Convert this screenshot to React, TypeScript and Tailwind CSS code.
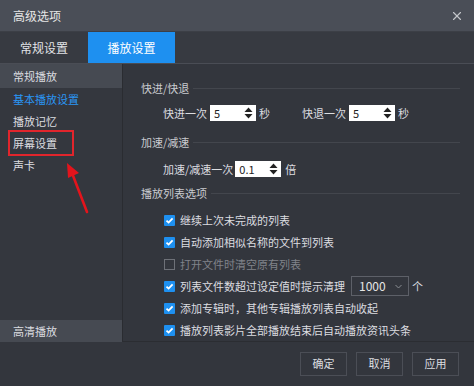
import { X } from 'lucide-react';

const font = { fontFamily: '"Noto Sans CJK SC", "Microsoft YaHei", sans-serif' };

const SectionTitle = ({ title }: { title: string }) => (
  <div className="flex items-center h-[16px] gap-[4px] text-[#c9cbcf]">
    <span className="whitespace-nowrap">{title}</span>
    <div className="flex-1 h-px bg-[#43464d]" />
  </div>
);

const Spin = ({ value, width }: { value: string; width: string }) => (
  <div className={`${width} h-[16px] bg-white flex items-center justify-between pl-[4px] pr-[3px] text-[#222]`}>
    <span className="leading-none">{value}</span>
    <svg width="9" height="12" viewBox="0 0 9 12">
      <path d="M4.5 0.5 L8.5 5 L0.5 5 Z" fill="#222" />
      <path d="M0.5 7 L8.5 7 L4.5 11.5 Z" fill="#222" />
    </svg>
  </div>
);

const Check = ({ label, checked = true, disabled = false, children }: { label: string; checked?: boolean; disabled?: boolean; children?: React.ReactNode }) => (
  <div className="flex items-center h-[22px] pl-[41px]">
    {checked ? (
      <div className="w-[11px] h-[11px] bg-[#1e90f0] flex items-center justify-center rounded-[1px]">
        <svg width="9" height="9" viewBox="0 0 9 9">
          <path d="M1.5 4.6 L3.6 6.6 L7.6 2.4" stroke="white" strokeWidth="1.8" fill="none" />
        </svg>
      </div>
    ) : (
      <div className="w-[11px] h-[11px] border border-[#6e7178]" />
    )}
    <span className={`ml-[5px] whitespace-nowrap ${disabled ? 'text-[#80838a]' : 'text-[#dcdde0]'}`}>{label}</span>
    {children}
  </div>
);

const App = () => {
  return (
    <div className="w-[474px] h-[386px] bg-[#33363d] flex flex-col text-[11px] overflow-hidden" style={font}>
      {/* Title bar */}
      <div className="h-[32px] bg-[#4a4e57] flex items-center justify-between pl-[13px] pr-[10px] border-b border-[#3c3f46]">
        <span className="text-[12px] text-[#e6e6e6]">高级选项</span>
        <X className="w-[14px] h-[14px] text-[#c3c5c9]" strokeWidth={2} />
      </div>

      {/* Tabs */}
      <div className="h-[32px] bg-[#373a41] flex border-b border-[#4a4d55] text-[12px]">
        <div className="w-[88px] flex items-center justify-center text-[#e2e3e6]">常规设置</div>
        <div className="w-[87px] flex items-center justify-center bg-[#1e90f0] text-white">播放设置</div>
      </div>

      {/* Main */}
      <div className="h-[278px] flex border-b border-[#2b2d32]">
        {/* Sidebar */}
        <div className="w-[123px] bg-[#34373e] border-r border-[#2a2c31] flex flex-col text-[#dcdde0] relative">
          <div className="h-[24px] bg-[#464a52] flex items-center pl-[13px]">常规播放</div>
          <div className="h-[22px] flex items-center pl-[13px] text-[#2a96f5]">基本播放设置</div>
          <div className="h-[22px] flex items-center pl-[13px]">播放记忆</div>
          <div className="h-[22px] flex items-center pl-[8px]">
            <div className="h-[26px] w-[66px] border-2 border-[#e1252c] flex items-center pl-[3px]">屏幕设置</div>
          </div>
          <div className="h-[22px] flex items-center pl-[13px]">声卡</div>
          <div className="flex-1" />
          <div className="h-[22px] bg-[#464a52] flex items-center pl-[13px] mb-[-1px]">高清播放</div>
          {/* red arrow annotation */}
          <svg className="absolute left-[60px] top-[96px]" width="34" height="56" viewBox="0 0 34 56">
            <path d="M27 52 L12 13" stroke="#e3141c" strokeWidth="2.6" strokeLinecap="round" />
            <path d="M7 3 L19 13 L8 18 Z" fill="#e3141c" />
          </svg>
        </div>

        {/* Content */}
        <div className="flex-1 flex flex-col pl-[18px] pr-[14px] pt-[16px] text-[#dcdde0]">
          <SectionTitle title="快进/快退" />
          <div className="flex items-center h-[16px] mt-[9px] pl-[22px]">
            <span>快进一次</span>
            <div className="ml-[3px]"><Spin value="5" width="w-[46px]" /></div>
            <span className="ml-[3px]">秒</span>
            <span className="ml-[32px]">快退一次</span>
            <div className="ml-[3px]"><Spin value="5" width="w-[46px]" /></div>
            <span className="ml-[3px]">秒</span>
          </div>
          <div className="mt-[13px]"><SectionTitle title="加速/减速" /></div>
          <div className="flex items-center h-[16px] mt-[11px] pl-[22px]">
            <span>加速/减速一次</span>
            <div className="ml-[2px]"><Spin value="0.1" width="w-[46px]" /></div>
            <span className="ml-[4px]">倍</span>
          </div>
          <div className="mt-[8px]"><SectionTitle title="播放列表选项" /></div>
          <div className="flex flex-col mt-[8px] -ml-[18px]">
            <Check label="继续上次未完成的列表" />
            <Check label="自动添加相似名称的文件到列表" />
            <Check label="打开文件时清空原有列表" checked={false} disabled />
            <Check label="列表文件数超过设定值时提示清理">
              <div className="ml-[6px] w-[58px] h-[20px] border border-[#5d6068] bg-[#33363d] flex items-center justify-between pl-[7px] pr-[6px] text-[12px] text-[#e6e6e6]">
                <span>1000</span>
                <svg width="7" height="5" viewBox="0 0 7 5">
                  <path d="M0.5 1 L3.5 4 L6.5 1" stroke="#8a8d93" fill="none" />
                </svg>
              </div>
              <span className="ml-[3px]">个</span>
            </Check>
            <Check label="添加专辑时，其他专辑播放列表自动收起" />
            <Check label="播放列表影片全部播放结束后自动播放资讯头条" />
          </div>
        </div>
      </div>

      {/* Footer buttons */}
      <div className="flex-1 flex items-center justify-end gap-[9px] pr-[15px] pb-[1px] text-[#dcdde0]">
        <div className="w-[47px] h-[24px] border border-[#4b4e56] flex items-center justify-center">确定</div>
        <div className="w-[47px] h-[24px] border border-[#4b4e56] flex items-center justify-center">取消</div>
        <div className="w-[47px] h-[24px] border border-[#4b4e56] flex items-center justify-center">应用</div>
      </div>
    </div>
  );
};

export default App;
